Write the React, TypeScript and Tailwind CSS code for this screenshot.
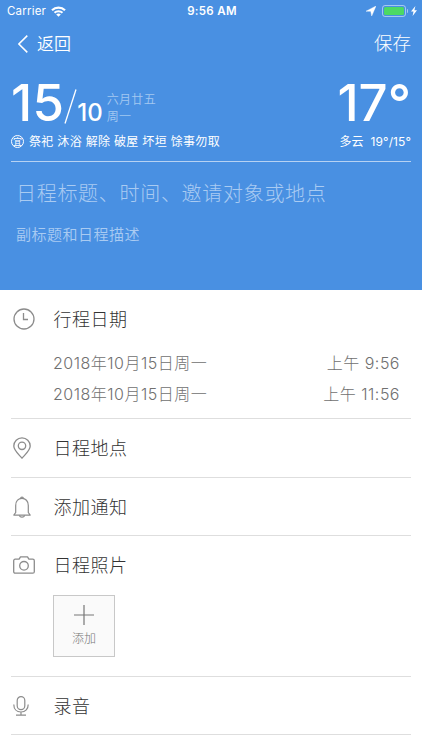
import React from "react"

interface IconProps {
  className?: string
}

const WifiIcon: React.FC<IconProps> = ({ className }) => (
  <svg className={className} viewBox="0 0 15 11" fill="none" stroke="currentColor">
    <path d="M1 4.2a9.3 9.3 0 0 1 13 0" strokeWidth={2.2} />
    <path d="M3.5 6.8a5.7 5.7 0 0 1 8 0" strokeWidth={2} />
    <path d="M7.5 10.8L5.2 8.5a3.3 3.3 0 0 1 4.6 0z" fill="currentColor" stroke="none" />
  </svg>
)

const LocationArrow: React.FC<IconProps> = ({ className }) => (
  <svg className={className} viewBox="0 0 10 10" fill="currentColor">
    <path d="M10 0L5.7 10 4.7 5.3 0 5.2z" stroke="currentColor" strokeWidth={0.4} />
  </svg>
)

const BoltIcon: React.FC<IconProps> = ({ className }) => (
  <svg className={className} viewBox="0 0 6 10" fill="currentColor">
    <path d="M4.4 0L0 5.5h2.5L1.6 10 6 4.3H3.4z" />
  </svg>
)

const ClockIcon: React.FC<IconProps> = ({ className }) => (
  <svg className={className} viewBox="0 0 22 22" fill="none" stroke="currentColor" strokeWidth={1.3}>
    <circle cx="11" cy="11" r="10" />
    <path d="M10.5 5v6.5H15" />
  </svg>
)

const PinIcon: React.FC<IconProps> = ({ className }) => (
  <svg className={className} viewBox="0 0 18 22" fill="none" stroke="currentColor" strokeWidth={1.3}>
    <path d="M9 21.2C6 17.6.8 13.4.8 9a8.2 8.2 0 0 1 16.4 0c0 4.4-5.2 8.6-8.2 12.2z" />
    <circle cx="9" cy="8.8" r="3.7" />
  </svg>
)

const BellIcon: React.FC<IconProps> = ({ className }) => (
  <svg className={className} viewBox="0 0 18 22" fill="none" stroke="currentColor" strokeWidth={1.2} strokeLinejoin="round">
    <path d="M2.7 16.5V9.5C2.7 5 5.5 2.4 9 2.4s6.3 2.6 6.3 7.1v7l1.9 2.6H.8z" />
    <path d="M7.6 2.5a1.4 1.4 0 0 1 2.8 0M6.4 19.3c.3 2.5 4.9 2.5 5.2 0" />
  </svg>
)

const CameraIcon: React.FC<IconProps> = ({ className }) => (
  <svg className={className} viewBox="0 0 22 18" fill="none" stroke="currentColor" strokeWidth={1.3} strokeLinejoin="round">
    <path d="M2.2 3.2h3.9L7.5.8h7l1.4 2.4h3.9c.9 0 1.500.6 1.500 1.500v11c0 .9-.6 1.500-1.500 1.500H2.2c-.9 0-1.500-.6-1.500-1.500v-11c0-.9.6-1.500 1.500-1.500z" />
    <circle cx="11" cy="9.8" r="4.3" />
  </svg>
)

const MicIcon: React.FC<IconProps> = ({ className }) => (
  <svg className={className} viewBox="0 0 16 20" fill="none" stroke="currentColor" strokeWidth={1.2}>
    <rect x="4.2" y=".6" width="7.6" height="13" rx="3.8" />
    <path d="M.8 8.5c0 4.5 2.7 7.5 7.2 7.5s7.2-3 7.2-7.5M8 16v3M3 19.2h10" />
  </svg>
)

interface SectionProps {
  icon: React.ReactNode
  title: string
  children?: React.ReactNode
}

const Section: React.FC<SectionProps> = ({ icon, title, children }) => (
  <section className="mx-[11px] border-b border-[#dedede]">
    <div className="flex h-[57.5px] items-center">
      <div className="w-[42.5px] pt-px pl-0.5 text-[#8c8c8c]">{icon}</div>
      <h2 className="pt-[3px] text-[18px] leading-[26px] font-light tracking-[0.5px] text-[#333333]">{title}</h2>
    </div>
    {children}
  </section>
)

const times = [
  { date: "2018年10月15日周一", time: "上午 9:56" },
  { date: "2018年10月15日周一", time: "上午 11:56" },
]

export default function App() {
  return (
    <div className="h-[750px] w-full overflow-hidden bg-white font-['Inter','Noto_Sans_CJK_SC',sans-serif]">
      <header className="h-[289.5px] bg-[#4990e2] text-white">
        {/* Status bar */}
        <div className="flex h-[22px] items-center pr-[5px] pl-[7px] text-[11.5px]">
          <div className="flex flex-1 items-center gap-[5px]">
            <span className="pt-px tracking-[0.2px]">Carrier</span>
            <WifiIcon className="h-[11px] w-[15px]" />
          </div>
          <span className="pt-px font-semibold tracking-[0.3px]">9:56 AM</span>
          <div className="flex flex-1 items-center justify-end">
            <LocationArrow className="mr-[6px] h-[10px] w-[10px]" />
            <div className="h-[12px] w-[24px] rounded-[3px] border border-white/50 p-px">
              <div className="h-full rounded-[1.5px] bg-[#4cd964]" />
            </div>
            <div className="ml-px h-1 w-[1.5px] rounded-r bg-white/50" />
            <BoltIcon className="ml-[3px] h-[10px] w-[6px]" />
          </div>
        </div>

        {/* Navigation */}
        <div className="flex h-[44px] items-center justify-between pr-[11px] pl-[18px]">
          <button className="flex items-center gap-[9px] text-[17px]">
            <svg className="h-[18px] w-[10px]" viewBox="0 0 10 18" fill="none" stroke="currentColor" strokeWidth={1.5}>
              <path d="M9.3.6L.9 9l8.4 8.4" />
            </svg>
            <span className="pt-0.5 font-[350]">返回</span>
          </button>
          <button className="text-[18.5px] font-light">保存</button>
        </div>

        {/* Date and weather */}
        <div className="mx-[11px] h-[96px] border-b border-white/60">
          <div className="flex h-[63px] items-end justify-between">
            <div className="flex items-end">
              <span className="mb-[1px] text-[51px] leading-[51px] font-medium tracking-[0.3px]">15</span>
              <svg className="mb-[5px] h-[35px] w-[13px]" viewBox="0 0 13 35" stroke="currentColor" strokeWidth={1.3}>
                <path d="M1 34.5L12 .5" />
              </svg>
              <span className="mb-[2px] text-[24px] leading-[28px] font-medium">10</span>
              <div className="mb-[4px] ml-[4px] text-[12px] leading-[17px] font-[350] tracking-[0.3px] text-[#a4c8f1]">
                <p>六月廿五</p>
                <p>周一</p>
              </div>
            </div>
            <span className="mb-[1px] text-[51px] leading-[51px] font-medium">17°</span>
          </div>
          <div className="flex h-[25px] items-center justify-between text-[12px]">
            <div className="flex items-center gap-[5px]">
              <span className="flex h-[13px] w-[13px] items-center justify-center rounded-full border border-white text-[9px] leading-none">宜</span>
              <span className="tracking-[0.32px]">祭祀 沐浴 解除 破屋 坏垣 馀事勿取</span>
            </div>
            <span className="tracking-[0.1px]">多云&nbsp; 19°/15°</span>
          </div>
        </div>

        <div className="px-4 pt-[17px] font-light text-[#a9cbf2]">
          <p className="text-[20px] leading-[30px] tracking-[0.7px]">日程标题、时间、邀请对象或地点</p>
          <p className="mt-[14px] text-[15px] leading-[24px] font-[350] tracking-[0.5px]">副标题和日程描述</p>
        </div>
      </header>

      <main>
        <Section icon={<ClockIcon className="h-[22px] w-[22px]" />} title="行程日期">
          <ul className="pt-[1px] pr-[11px] pb-[8px] pl-[42px] text-[16px] leading-[31px] font-light tracking-[0.5px] text-[#707070]">
            {times.map((item) => (
              <li key={item.time} className="flex justify-between">
                <span>{item.date}</span>
                <span>{item.time}</span>
              </li>
            ))}
          </ul>
        </Section>
        <Section icon={<PinIcon className="h-[22px] w-[18px]" />} title="日程地点" />
        <Section icon={<BellIcon className="h-[22px] w-[18px]" />} title="添加通知" />
        <Section icon={<CameraIcon className="h-[18px] w-[22px]" />} title="日程照片">
          <div className="pt-px pb-[19px] pl-[42px]">
            <button className="flex h-[62px] w-[62px] flex-col items-center border border-[#c8c8c8] bg-[#fafafa] pt-[9px] text-[#777777]">
              <svg className="h-[20px] w-[20px]" viewBox="0 0 20 20" stroke="currentColor" strokeWidth={1.2}>
                <path d="M10 0v20M0 10h20" />
              </svg>
              <span className="mt-[5px] text-[12px] leading-[18px] font-light">添加</span>
            </button>
          </div>
        </Section>
        <Section icon={<MicIcon className="h-[20px] w-[16px]" />} title="录音" />
      </main>
    </div>
  )
}
